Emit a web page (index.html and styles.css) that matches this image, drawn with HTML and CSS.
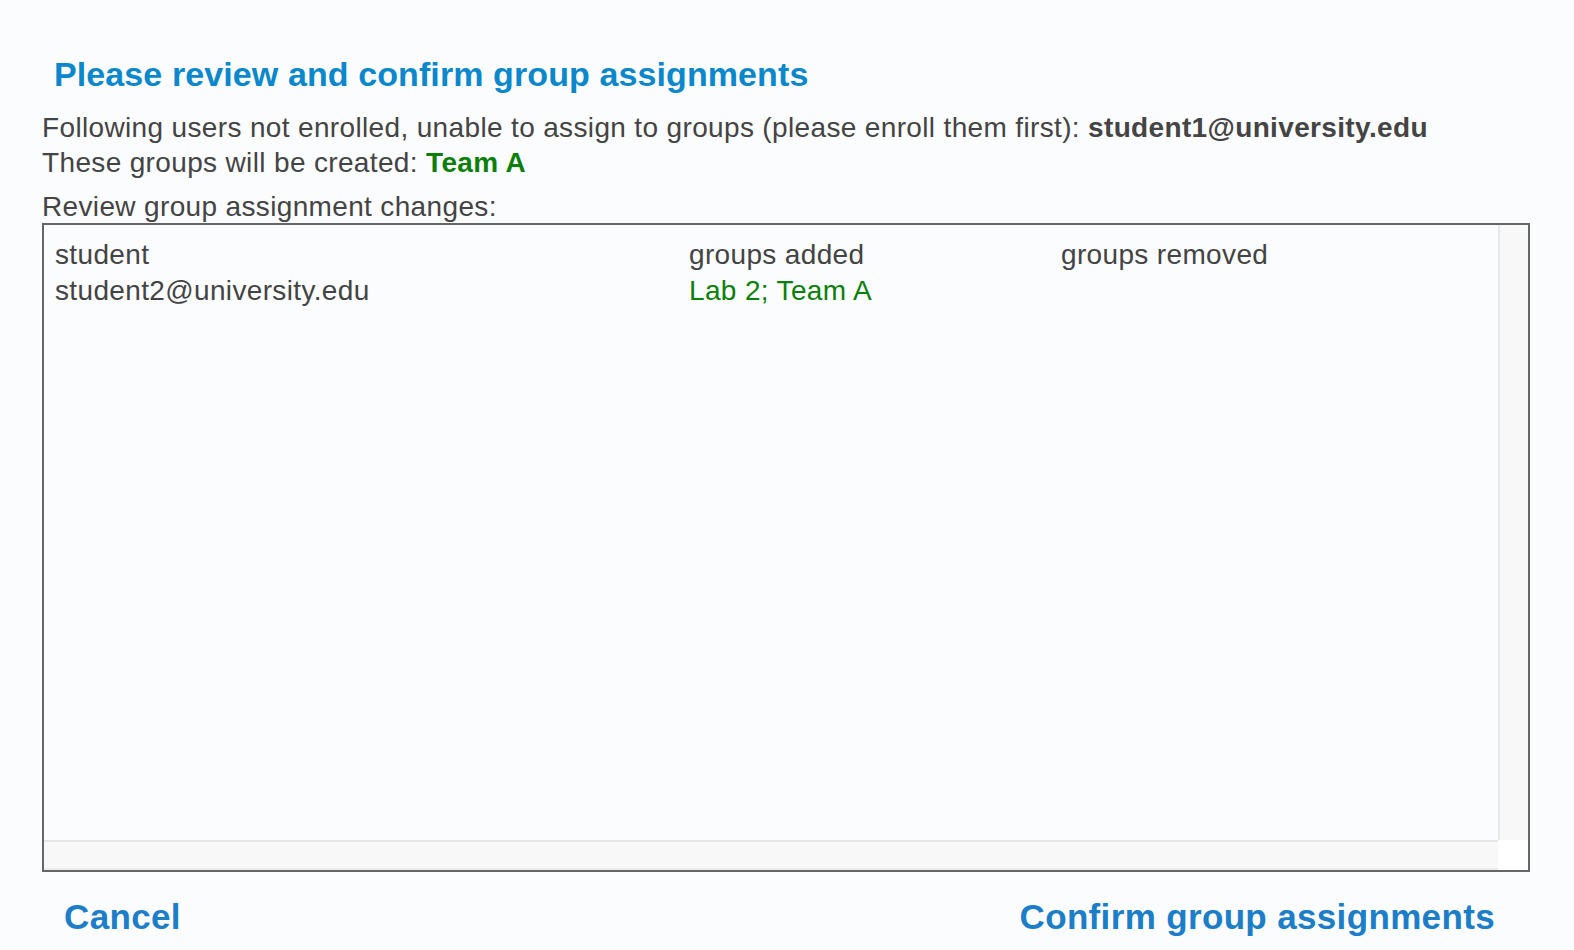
FILE: index.html
```html
<!DOCTYPE html>
<html>
<head>
<meta charset="utf-8">
<link rel="stylesheet" href="styles.css">
</head>
<body>
<div class="page">
  <h1 class="title">Please review and confirm group assignments</h1>
  <p class="line">Following users not enrolled, unable to assign to groups (please enroll them first): <b>student1@university.edu</b></p>
  <p class="line">These groups will be created: <b class="green">Team A</b></p>
  <p class="line review">Review group assignment changes:</p>
  <div class="box">
    <div class="content">
      <div class="row">
        <span class="c1">student</span><span class="c2">groups added</span><span class="c3">groups removed</span>
      </div>
      <div class="row">
        <span class="c1">student2@university.edu</span><span class="c2 green">Lab 2; Team A</span><span class="c3"></span>
      </div>
    </div>
    <div class="vtrack"></div>
    <div class="htrack"></div>
    <div class="corner"></div>
  </div>
  <div class="actions">
    <a class="btn">Cancel</a>
    <a class="btn">Confirm group assignments</a>
  </div>
</div>
</body>
</html>
```
FILE: styles.css
```css
html, body {
  margin: 0;
  padding: 0;
  background: #fbfcfe;
}
body {
  font-family: "Liberation Sans", Arial, Helvetica, sans-serif;
  color: #444;
}
.page {
  padding: 53px 44px 0 42px;
}
.title {
  margin: 0 0 15px 12px;
  font-size: 34px;
  line-height: 42px;
  font-weight: bold;
  letter-spacing: 0.1px;
  color: #0b87cc;
}
.line {
  margin: 0;
  font-size: 28px;
  line-height: 35px;
  letter-spacing: 0.35px;
}
.line b { font-weight: bold; }
.review {
  margin-top: 9px;
  margin-bottom: -1px;
}
.green { color: #0a800a; }
.box {
  border: 2px solid #666;
  height: 645px;
  display: grid;
  grid-template-columns: 1fr 30px;
  grid-template-rows: 1fr 30px;
}
.content {
  padding: 12px 11px;
  font-size: 28px;
  line-height: 36px;
  letter-spacing: 0.35px;
}
.row {
  display: flex;
}
.c1 { width: 634px; flex: none; }
.c2 { width: 372px; flex: none; }
.vtrack {
  background: #f8f8f8;
  border-left: 2px solid #e8e8e8;
}
.htrack {
  background: #f8f8f8;
  border-top: 2px solid #e6e6e6;
  border-bottom: 2px solid #ececec;
}
.corner {
  background: #ffffff;
}
.actions {
  display: flex;
  justify-content: space-between;
  padding: 23px 35px 0 22px;
}
.btn {
  font-size: 35px;
  line-height: 44px;
  font-weight: bold;
  letter-spacing: 0.35px;
  color: #1c7dc8;
  cursor: pointer;
}
```
